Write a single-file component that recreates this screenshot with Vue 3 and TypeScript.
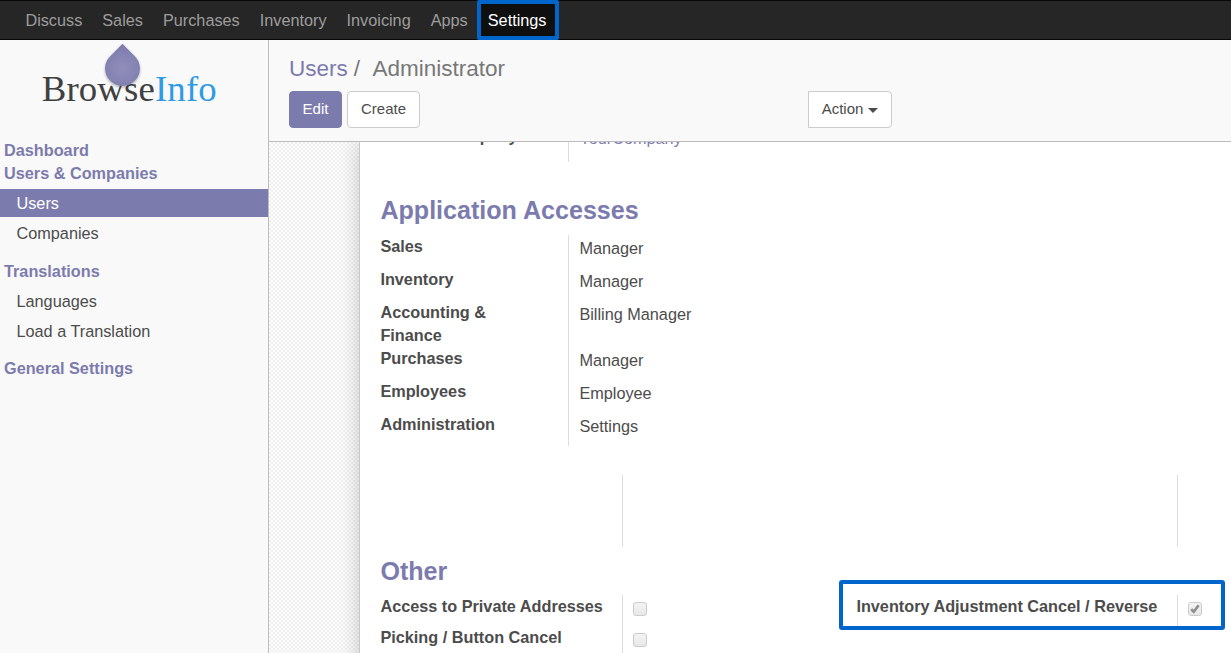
<script setup lang="ts">
interface MenuEntry {
  label: string
  active?: boolean
}
interface MenuSection {
  title: string
  items: MenuEntry[]
}
interface Field {
  label: string
  value: string
  tall?: boolean
}

const apps: MenuEntry[] = [
  { label: 'Discuss' },
  { label: 'Sales' },
  { label: 'Purchases' },
  { label: 'Inventory' },
  { label: 'Invoicing' },
  { label: 'Apps' },
  { label: 'Settings', active: true },
]

const sections: MenuSection[] = [
  { title: 'Dashboard', items: [] },
  { title: 'Users & Companies', items: [{ label: 'Users', active: true }, { label: 'Companies' }] },
  { title: 'Translations', items: [{ label: 'Languages' }, { label: 'Load a Translation' }] },
  { title: 'General Settings', items: [] },
]

const accesses: Field[] = [
  { label: 'Sales', value: 'Manager' },
  { label: 'Inventory', value: 'Manager' },
  { label: 'Accounting & Finance', value: 'Billing Manager', tall: true },
  { label: 'Purchases', value: 'Manager' },
  { label: 'Employees', value: 'Employee' },
  { label: 'Administration', value: 'Settings' },
]

const others: string[] = ['Access to Private Addresses', 'Picking / Button Cancel']
</script>

<template>
  <div class="client">
    <nav class="navbar">
      <a v-for="app in apps" :key="app.label" class="nav-item" :class="{ active: app.active }">{{ app.label }}</a>
    </nav>
    <div class="main">
      <aside class="sidebar">
        <div class="logo">
          <svg width="268" height="99" viewBox="0 0 268 99">
            <text x="41.7" y="60.5" font-size="36.8" textLength="175" lengthAdjust="spacing" class="brand">Browse<tspan class="brand-info">Info</tspan></text>
          </svg>
          <span class="drop"></span>
        </div>
        <div v-for="section in sections" :key="section.title" class="section" :class="{ filled: section.items.length }">
          <div class="section-title">{{ section.title }}</div>
          <ul v-if="section.items.length" class="section-items">
            <li v-for="item in section.items" :key="item.label" :class="{ active: item.active }">{{ item.label }}</li>
          </ul>
        </div>
      </aside>
      <section class="content">
        <header class="control-panel">
          <div class="breadcrumb"><a>Users</a><span class="slash">/</span><span>Administrator</span></div>
          <div class="buttons">
            <button class="btn primary">Edit</button>
            <button class="btn create">Create</button>
            <button class="btn action">Action<i class="caret"></i></button>
          </div>
        </header>
        <div class="view">
          <div class="sheet">
            <div class="company">
              <div class="label"><span>Current Company</span></div>
              <div class="value link"><span>YourCompany</span></div>
            </div>
            <h2 class="title-access">Application Accesses</h2>
            <div class="accesses">
              <div v-for="field in accesses" :key="field.label" class="row" :class="{ tall: field.tall }">
                <div class="label">{{ field.label }}</div>
                <div class="value">{{ field.value }}</div>
              </div>
            </div>
            <div class="blank"><div></div><div></div><div></div></div>
            <h2 class="title-other">Other</h2>
            <div class="others">
              <div class="other-left">
                <div v-for="name in others" :key="name" class="check-row">
                  <div class="label">{{ name }}</div>
                  <div class="check-cell"><span class="checkbox"></span></div>
                </div>
              </div>
              <div class="marked">
                <div class="label">Inventory Adjustment Cancel / Reverse</div>
                <div class="check-cell">
                  <span class="checkbox">
                    <svg width="12" height="12" viewBox="0 0 12 12"><path d="M2.2 6.2 L4.8 8.8 L9.6 2.2" fill="none" stroke="#8f8f8f" stroke-width="2.7" /></svg>
                  </span>
                </div>
              </div>
            </div>
          </div>
        </div>
      </section>
    </div>
  </div>
</template>

<style>
body {
  margin: 0;
  overflow: hidden;
}
</style>

<style scoped>
* {
  box-sizing: border-box;
}
.client {
  width: 1231px;
  height: 653px;
  overflow: hidden;
  display: flex;
  flex-direction: column;
  font-family: "Liberation Sans", Arial, sans-serif;
  font-size: 16.25px;
  line-height: 23px;
  color: #4c4c4c;
  background: #fff;
}
.navbar {
  flex: none;
  display: flex;
  height: 40px;
  padding-left: 15.4px;
  background: #262626;
  box-shadow: inset 0 1px #080808, inset 0 -1px #080808;
}
.nav-item {
  padding: 9px 10px 0;
  color: #9d9d9d;
}
.nav-item.active {
  width: 82px;
  height: 40px;
  margin-left: -0.5px;
  padding: 5px 0 0 6.5px;
  border: 4px solid #0066cc;
  border-radius: 2px;
  background: #0f0f0f;
  color: #fff;
}
.main {
  flex: 1;
  min-height: 0;
  display: flex;
}
.sidebar {
  flex: none;
  width: 269px;
  background: #f9f9f9;
  border-right: 1px solid #bcbcbc;
}
.logo {
  position: relative;
  height: 99px;
}
.logo svg {
  display: block;
}
.brand {
  font-family: "Liberation Serif", "Times New Roman", serif;
  fill: #404040;
}
.brand-info {
  fill: #2e9be4;
}
.drop {
  position: absolute;
  left: 105px;
  top: 10.5px;
  width: 35px;
  height: 35px;
  border-radius: 0 50% 50% 50%;
  transform: rotate(45deg);
  background: radial-gradient(circle, #918eb9, #7c7bad);
  box-shadow: 1px 1px 3px rgba(0, 0, 0, 0.3);
}
.section {
  color: #7c7bad;
}
.section.filled {
  padding-bottom: 10.6px;
}
.section-title {
  height: 23px;
  padding-left: 4px;
  font-weight: bold;
}
.section-items {
  margin: 0;
  padding: 4px 0 0;
  list-style: none;
  color: #4c4c4c;
}
.section-items li {
  height: 28px;
  margin-bottom: 2px;
  padding: 3px 0 0 16.5px;
}
.section-items li.active {
  background: #7c7bad;
  color: #fff;
}
.content {
  flex: 1;
  min-width: 0;
  display: flex;
  flex-direction: column;
}
.control-panel {
  flex: none;
  height: 102px;
  padding: 13px 20px 0;
  border-bottom: 1px solid #bcbcbc;
  background: #f9f9f9;
}
.breadcrumb {
  height: 38px;
  font-size: 22.5px;
  line-height: 32px;
  color: #777;
}
.breadcrumb a {
  color: #7c7bad;
}
.slash {
  margin: 0 12.5px 0 6px;
}
.buttons {
  display: flex;
}
.btn {
  height: 37px;
  padding: 0 0 2px;
  border: 1px solid #ccc;
  border-radius: 4px;
  background: #fff;
  font-family: inherit;
  font-size: 15px;
  color: #4c4c4c;
}
.btn.primary {
  width: 53px;
  margin-right: 5px;
  border-color: #7c7bad;
  background: #7c7bad;
  color: #fff;
}
.btn.create {
  width: 73px;
}
.btn.action {
  width: 84px;
  margin-left: 388px;
  border-radius: 0 4px 4px 0;
}
.caret {
  display: inline-block;
  margin-left: 5px;
  vertical-align: middle;
  border: 5px solid transparent;
  border-top-color: #4c4c4c;
  border-bottom: 0;
}
.view {
  flex: 1;
  min-height: 0;
  padding-left: 90px;
  overflow: hidden;
  background: repeating-conic-gradient(#f0f0f0 0 25%, #fcfcfc 0 50%) 0 0 / 4px 4px;
}
.sheet {
  height: 600px;
  padding-left: 20.4px;
  border-left: 1px solid #c8c8d3;
  background: #fff;
  box-shadow: 0 0 20px rgba(0, 0, 0, 0.2);
}
.label {
  font-weight: bold;
}
.company {
  display: flex;
  height: 20px;
}
.company .label,
.row .label {
  width: 187.8px;
  padding-right: 50px;
}
.company .label,
.company .value {
  display: flex;
  align-items: flex-end;
  white-space: nowrap;
}
.company .label span {
  margin-bottom: 14px;
}
.company .value span {
  margin-bottom: 12px;
}
.value {
  border-left: 1px solid #ddd;
  padding: 2px 0 0 10.2px;
}
.value.link {
  color: #7c7bad;
}
h2 {
  margin: 0;
  font-size: 25.08px;
  line-height: 36px;
  color: #7c7bad;
}
.title-access {
  padding-top: 30px;
  height: 73px;
}
.row {
  display: flex;
  height: 33px;
}
.row.tall {
  height: 46px;
}
.blank {
  display: grid;
  grid-template-columns: 241.6px 555px 1fr;
  height: 72px;
  margin-top: 29px;
}
.blank div + div {
  border-left: 1px solid #ddd;
}
.title-other {
  padding-top: 6px;
  height: 48px;
}
.others {
  display: flex;
  align-items: flex-start;
}
.other-left {
  width: 458.6px;
}
.check-row {
  display: flex;
  height: 31px;
}
.check-row .label {
  width: 241.6px;
}
.check-cell {
  border-left: 1px solid #ddd;
  padding: 7px 0 0 10px;
}
.checkbox {
  display: block;
  width: 14px;
  height: 14px;
  border: 1px solid #ccc;
  border-radius: 3px;
  background: linear-gradient(#f3f3f3, #e8e8e8);
}
.checkbox svg {
  display: block;
}
.marked {
  display: flex;
  width: 386px;
  height: 50px;
  margin-top: -15px;
  padding: 11px 0 0 13.4px;
  border: 4px solid #0066cc;
  border-radius: 3px;
}
.marked .label {
  width: 320.6px;
}
</style>
